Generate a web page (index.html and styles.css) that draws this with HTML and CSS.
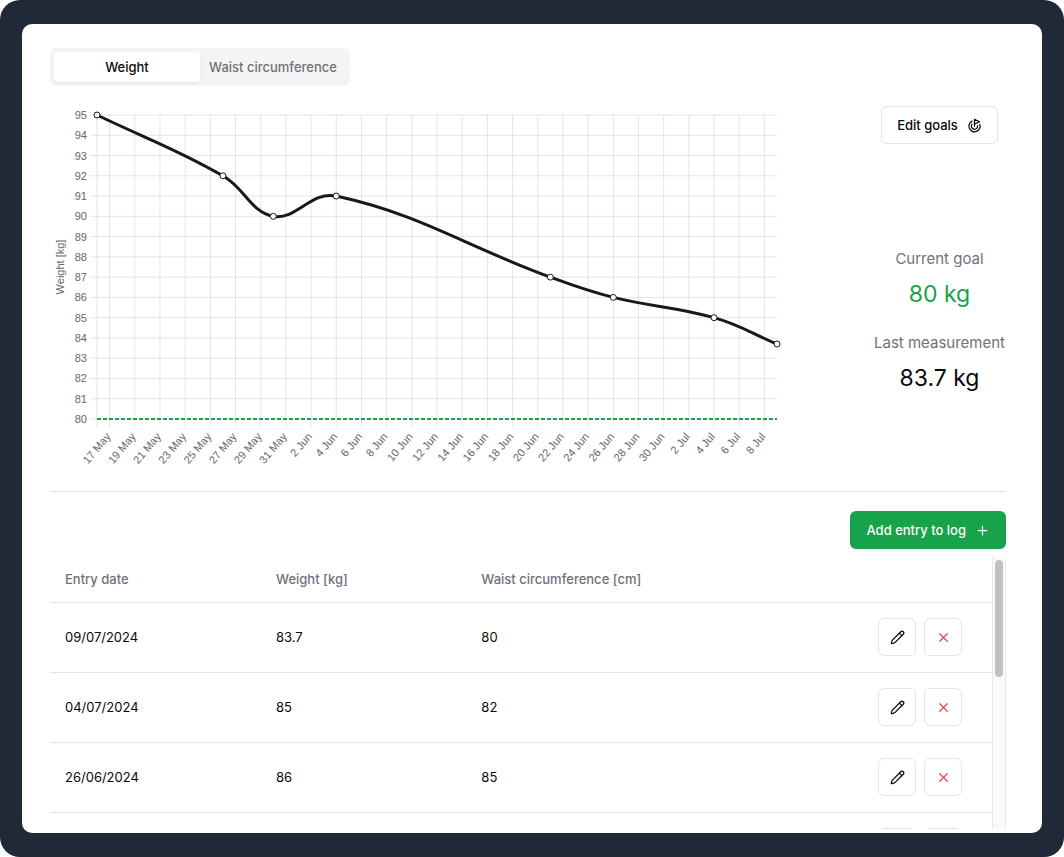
FILE: index.html
```
<!DOCTYPE html>
<html lang="en">
<head>
<meta charset="utf-8">
<meta name="viewport" content="width=device-width, initial-scale=1">
<title>Body measurements</title>
<link rel="stylesheet" href="styles.css">
</head>
<body>
<svg class="sprite" aria-hidden="true">
  <symbol id="icon-pencil" viewBox="0 0 24 24"><g fill="none" stroke="currentColor" stroke-width="2" stroke-linecap="round" stroke-linejoin="round"><path d="M21.174 6.812a1 1 0 0 0-3.986-3.987L3.842 16.174a2 2 0 0 0-.5.83l-1.321 4.352a.5.5 0 0 0 .623.622l4.353-1.320a2 2 0 0 0 .83-.497z"/><path d="m15 5 4 4"/></g></symbol>
  <symbol id="icon-cross" viewBox="0 0 24 24"><path fill="none" stroke="currentColor" stroke-width="2" stroke-linecap="round" d="M18 6 6 18M6 6l12 12"/></symbol>
</svg>
<div class="frame">
  <main class="card">
    <div class="tabs" role="tablist">
      <button class="tab tab-active" role="tab" aria-selected="true" type="button">Weight</button>
      <button class="tab" role="tab" aria-selected="false" type="button">Waist circumference</button>
    </div>
    <section class="overview">
      <svg class="chart" id="chart" viewBox="0 0 735 376" role="img" aria-label="Weight over time"></svg>
      <aside class="summary">
        <button class="button button-outline" type="button">Edit goals
          <svg class="icon" viewBox="0 0 24 24" fill="none" stroke="currentColor" stroke-width="2" stroke-linecap="round" stroke-linejoin="round" aria-hidden="true"><path d="M12 13V2l8 4-8 4"/><path d="M20.561 10.222a9 9 0 1 1-12.55-5.29"/><path d="M8.002 9.997a5 5 0 1 0 8.9 2.02"/></svg>
        </button>
        <dl class="stats">
          <div><dt>Current goal</dt><dd class="goal">80 kg</dd></div>
          <div><dt>Last measurement</dt><dd>83.7 kg</dd></div>
        </dl>
      </aside>
    </section>
    <div class="actions">
      <button class="button button-primary" type="button">Add entry to log
        <svg class="icon" viewBox="0 0 24 24" fill="none" stroke="currentColor" stroke-width="2" stroke-linecap="round" aria-hidden="true"><path d="M5 12h14M12 5v14"/></svg>
      </button>
    </div>
    <div class="log">
      <div class="log-scroller" id="scroller">
        <table class="entries">
          <colgroup><col class="col-date"><col class="col-weight"><col><col class="col-actions"></colgroup>
          <thead><tr><th scope="col">Entry date</th><th scope="col">Weight [kg]</th><th scope="col">Waist circumference [cm]</th><td></td></tr></thead>
          <tbody id="entries"></tbody>
        </table>
      </div>
      <div class="scroll-track" aria-hidden="true"><div class="scroll-thumb" id="thumb"></div></div>
    </div>
  </main>
</div>
<script src="app.js"></script>
</body>
</html>
```
FILE: styles.css
```
* { box-sizing: border-box; }
body {
  margin: 0;
  background: #fff;
  color: #09090b;
  font-family: Inter, "Liberation Sans", sans-serif;
  font-size: 13px;
  line-height: 20px;
}
button { font: inherit; color: inherit; cursor: pointer; }
.sprite { display: none; }
.frame {
  height: 100vh;
  padding: 24px 22px;
  border-radius: 20px;
  background: #1f2937;
}
.card {
  display: flex;
  flex-direction: column;
  height: 100%;
  padding: 24px 36px 4px 28px;
  border-radius: 10px;
  background: #fff;
}
.tabs {
  display: flex;
  align-self: flex-start;
  padding: 4px;
  border-radius: 6px;
  background: #f4f4f5;
}
.tab {
  min-width: 146px;
  padding: 4px 8px;
  border: 0;
  border-radius: 4px;
  background: none;
  color: #71717a;
  font-weight: 500;
  line-height: 22px;
}
.tab-active {
  background: #fff;
  color: #09090b;
  box-shadow: 0 1px 2px rgba(0, 0, 0, .08);
}
.overview {
  display: flex;
  gap: 88px;
  padding: 20px 0 9px;
  border-bottom: 1px solid #e4e4e7;
}
.chart { flex: 1; min-width: 0; }
.chart text { font: 11px "Liberation Sans", Arial, sans-serif; fill: #666; }
.grid { stroke: #000; stroke-opacity: .1; fill: none; }
.goal-line { stroke: #16a34a; stroke-width: 2; stroke-dasharray: 4 2; }
.curve { stroke: #18181b; stroke-width: 3; fill: none; }
.point { stroke: #18181b; stroke-width: 1; fill: #fff; }
.summary {
  display: flex;
  flex: 0 0 133px;
  flex-direction: column;
  align-items: center;
}
.button {
  display: inline-flex;
  align-items: center;
  gap: 9px;
  height: 38px;
  padding: 0 15px;
  border: 1px solid transparent;
  border-radius: 6px;
  font-weight: 500;
}
.button-outline { border-color: #e4e4e7; background: #fff; }
.button-primary { background: #16a34a; color: #fafafa; }
.icon { width: 15px; height: 15px; }
.stats {
  display: grid;
  gap: 14px;
  margin: auto 0;
  padding-top: 17px;
  text-align: center;
  white-space: nowrap;
}
.stats dt { color: #71717a; font-size: 15px; line-height: 28px; }
.stats dd { margin: 0; font-size: 23px; line-height: 42px; }
.stats .goal { color: #16a34a; }
.actions {
  display: flex;
  justify-content: flex-end;
  padding: 19px 0 8px;
}
.log {
  display: flex;
  flex: 1;
  min-height: 0;
}
.log-scroller {
  flex: 1;
  overflow-y: auto;
  scrollbar-width: none;
}
.scroll-track {
  width: 14px;
  padding: 3px 2px;
  border: 1px solid #e8e8e8;
  border-width: 0 1px;
  background: #fafafa;
}
.scroll-thumb {
  width: 8px;
  height: 44%;
  margin: 0 auto;
  border-radius: 4px;
  background: #c1c1c1;
}
.entries {
  width: 100%;
  border-collapse: collapse;
  table-layout: fixed;
}
.col-date { width: 22.4%; }
.col-weight { width: 21.8%; }
.col-actions { width: 129px; }
.entries th, .entries td {
  padding: 0 15px;
  border-bottom: 1px solid #e4e4e7;
  text-align: left;
}
.entries th { height: 45px; color: #71717a; font-weight: 500; }
.entries tbody td { height: 70px; }
.row-actions { display: flex; gap: 8px; }
.icon-button {
  display: grid;
  place-items: center;
  width: 38px;
  height: 38px;
  padding: 0;
  border: 1px solid #e4e4e7;
  border-radius: 6px;
  background: #fff;
}
.icon-button-danger { color: #ef4444; }
```
FILE: app.js
```
const entries = [
  { day: 54, date: "09/07/2024", weight: 83.7, waist: 80 },
  { day: 49, date: "04/07/2024", weight: 85, waist: 82 },
  { day: 41, date: "26/06/2024", weight: 86, waist: 85 },
  { day: 36, date: "21/06/2024", weight: 87, waist: 86 },
  { day: 19, date: "04/06/2024", weight: 91, waist: 88 },
  { day: 14, date: "30/05/2024", weight: 90, waist: 89 },
  { day: 10, date: "26/05/2024", weight: 92, waist: 90 },
  { day: 0, date: "16/05/2024", weight: 95, waist: 92 }
];

document.getElementById("entries").innerHTML = entries.map(e => `
  <tr><td>${e.date}</td><td>${e.weight}</td><td>${e.waist}</td>
  <td><div class="row-actions">
    <button class="icon-button" type="button" aria-label="Edit entry"><svg class="icon"><use href="#icon-pencil"/></svg></button>
    <button class="icon-button icon-button-danger" type="button" aria-label="Delete entry"><svg class="icon"><use href="#icon-cross"/></svg></button>
  </div></td></tr>`).join("");

const scroller = document.getElementById("scroller");
const thumb = document.getElementById("thumb");
scroller.addEventListener("scroll", () => {
  const range = scroller.scrollHeight - scroller.clientHeight;
  const travel = scroller.clientHeight - thumb.offsetHeight - 6;
  thumb.style.transform = `translateY(${range ? scroller.scrollTop / range * travel : 0}px)`;
});

const area = { left: 47, right: 727, top: 9, bottom: 313 };
const xOf = day => area.left + day * (area.right - area.left) / 54;
const yOf = kg => area.top + (95 - kg) * (area.bottom - area.top) / 15;

let grid = `M${area.left} ${area.top}V${area.bottom + 8}`;
let labels = "";
for (let kg = 80; kg <= 95; kg++) {
  grid += `M${area.left - 7} ${yOf(kg)}H${area.right}`;
  labels += `<text x="37" y="${yOf(kg) + 4}" text-anchor="end">${kg}</text>`;
}
const start = Date.UTC(2024, 4, 16);
const months = ["Jan", "Feb", "Mar", "Apr", "May", "Jun", "Jul"];
for (let day = 1; day < 54; day += 2) {
  const x = xOf(day);
  const date = new Date(start + day * 864e5);
  grid += `M${x} ${area.top}V${area.bottom + 8}`;
  labels += `<text transform="translate(${x - 3} ${area.bottom + 14}) rotate(-50)" text-anchor="end" y="6">${date.getUTCDate()} ${months[date.getUTCMonth()]}</text>`;
}

// Cardinal spline, with control points weighted by the distance to each neighbour.
const points = entries.map(e => [xOf(e.day), yOf(e.weight)]).reverse();
const clampY = y => Math.min(area.bottom, Math.max(area.top, y));
const controls = points.map((p, i) => {
  const a = points[Math.max(i - 1, 0)];
  const b = points[Math.min(i + 1, points.length - 1)];
  const da = Math.hypot(p[0] - a[0], p[1] - a[1]);
  const db = Math.hypot(b[0] - p[0], b[1] - p[1]);
  const fa = 0.4 * da / (da + db);
  const fb = 0.4 * db / (da + db);
  return {
    before: [p[0] - fa * (b[0] - a[0]), clampY(p[1] - fa * (b[1] - a[1]))],
    after: [p[0] + fb * (b[0] - a[0]), clampY(p[1] + fb * (b[1] - a[1]))]
  };
});
let curve = `M${points[0]}`;
for (let i = 1; i < points.length; i++) {
  curve += `C${controls[i - 1].after} ${controls[i].before} ${points[i]}`;
}

document.getElementById("chart").innerHTML = `
  <path class="grid" d="${grid}"/>
  <path class="goal-line" d="M${area.left} ${area.bottom}H${area.right}"/>
  <path class="curve" d="${curve}"/>
  ${points.map(p => `<circle class="point" cx="${p[0]}" cy="${p[1]}" r="3"/>`).join("")}
  ${labels}
  <text transform="translate(14 161) rotate(-90)" text-anchor="middle">Weight [kg]</text>`;
```
